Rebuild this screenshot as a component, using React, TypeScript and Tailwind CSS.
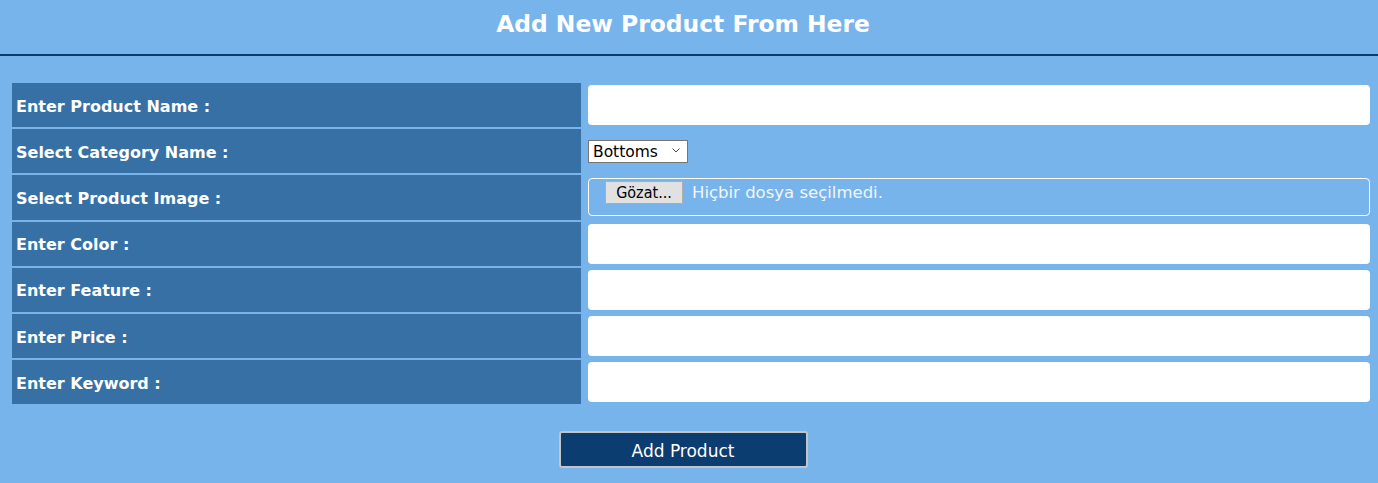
import { useState } from "react";

const fields = [
  { label: "Enter Product Name :", type: "text" },
  { label: "Select Category Name :", type: "select" },
  { label: "Select Product Image :", type: "file" },
  { label: "Enter Color :", type: "text" },
  { label: "Enter Feature :", type: "text" },
  { label: "Enter Price :", type: "text" },
  { label: "Enter Keyword :", type: "text" },
];

export default function App() {
  const [category, setCategory] = useState("Bottoms");

  return (
    <div className="min-h-[483px] w-full bg-[#78b4ec] font-['DejaVu_Sans',sans-serif]">
      <div className="w-[1366px] h-[54px] flex items-center justify-center">
        <h1 className="text-[23.4px] font-bold text-white pb-[5px]">
          Add New Product From Here
        </h1>
      </div>
      <div className="h-[2px] w-full bg-[#0a3d6f]"></div>

      <div className="pt-[27px] pl-[12px] pr-[8px] grid grid-cols-[569px_1fr] gap-x-[7px] gap-y-[2px]">
        {fields.map((f) => (
          <div key={f.label} className="contents">
            <div className="h-[44.2px] bg-[#3770a5] flex items-center pl-[4px] pt-[3px] text-white font-bold text-[16px]">
              {f.label}
            </div>
            <div className="h-[44.2px] flex items-center">
              {f.type === "text" && (
                <input
                  type="text"
                  className="w-full h-[40px] bg-white rounded-[4px] outline-none px-2"
                />
              )}
              {f.type === "select" && (
                <div className="relative mt-[1px]">
                  <select
                    value={category}
                    onChange={(e) => setCategory(e.target.value)}
                    className="appearance-none h-[23px] w-[100px] bg-white border border-[#767676] text-[15.5px] text-black pl-[4px] outline-none"
                  >
                    <option>Bottoms</option>
                    <option>Tops</option>
                    <option>Shoes</option>
                  </select>
                  <svg
                    className="absolute right-[8px] top-[8px] pointer-events-none"
                    width="8"
                    height="5"
                    viewBox="0 0 8 5"
                  >
                    <path d="M0.5 0.5 L4 4 L7.5 0.5" fill="none" stroke="#333" strokeWidth="0.9" />
                  </svg>
                </div>
              )}
              {f.type === "file" && (
                <div className="w-full h-[38px] border border-white rounded-[4px] flex items-start pt-[2px] pl-[16px] gap-[9px]">
                  <span className="h-[23px] w-[78px] bg-[#e1e1e1] border border-[#adadad] text-black text-[16px] flex items-center justify-center font-['DejaVu_Sans_Condensed',sans-serif]">
                    Gözat...
                  </span>
                  <span className="text-[16.5px] text-[#f2f6fb] leading-[23px]">
                    Hiçbir dosya seçilmedi.
                  </span>
                </div>
              )}
            </div>
          </div>
        ))}
      </div>

      <div className="w-[1366px] flex justify-center pt-[27px] pb-[14px]">
        <button className="w-[249px] h-[37px] bg-[#0b3d70] border-2 border-[#c4c4c4] rounded-[3px] text-white text-[17px] pt-[4px]">
          Add Product
        </button>
      </div>
    </div>
  );
}
